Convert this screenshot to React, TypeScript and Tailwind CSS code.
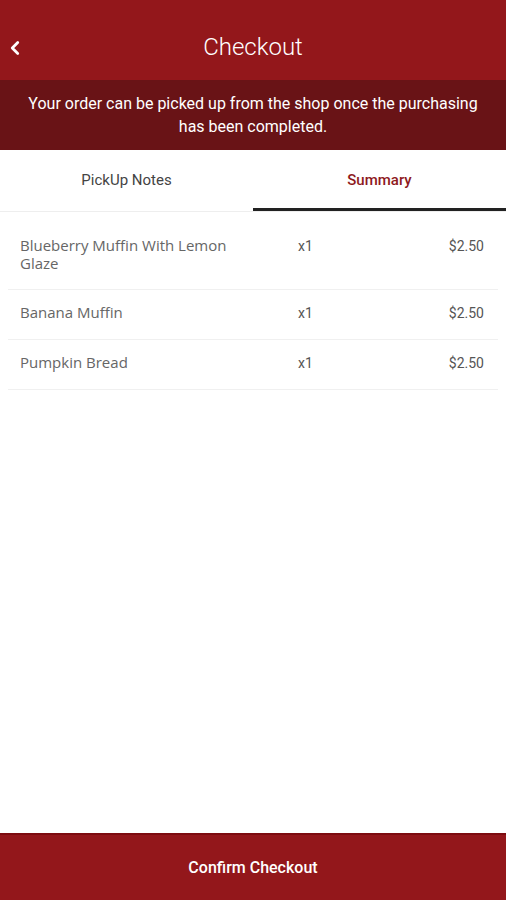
import { ChevronLeft } from "lucide-react";

const items = [
  { name: "Blueberry Muffin With Lemon Glaze", qty: 1, price: "$2.50" },
  { name: "Banana Muffin", qty: 1, price: "$2.50" },
  { name: "Pumpkin Bread", qty: 1, price: "$2.50" },
];

export default function App() {
  return (
    <div className="flex h-[900px] w-[506px] flex-col bg-white font-['Roboto',sans-serif]">
      <header className="relative flex h-[80px] items-center justify-center bg-[#93171b] pt-[14px]">
        <button className="absolute left-[4px] top-[37px] text-white">
          <ChevronLeft size={22} strokeWidth={3} />
        </button>
        <h1 className="text-[24px] font-light text-white">Checkout</h1>
      </header>

      <div className="flex h-[70px] items-center justify-center bg-[#691316] px-4 text-center text-[16px] leading-[23px] text-white">
        Your order can be picked up from the shop once the purchasing has been completed.
      </div>

      <div className="flex h-[62px] border-b border-[#eeeeee]">
        <div className="flex flex-1 items-center justify-center text-[15px] font-normal text-[#444]">PickUp Notes</div>
        <div className="flex flex-1 items-center justify-center border-b-[3px] border-[#222] pt-[3px] text-[15px] font-medium text-[#8e1a1d]">
          Summary
        </div>
      </div>

      <div className="flex-1 px-[8px] pt-[11px]">
        {items.map((item) => (
          <div key={item.name} className="flex border-b border-[#f0f0f0] pb-[17px] pt-[13px]">
            <div className="w-[242px] pl-[12px] font-['Open_Sans',sans-serif] text-[15px] leading-[18px] text-[#666]">
              {item.name}
            </div>
            <div className="w-[124px] pl-[48px] pt-[1px] text-[14px] leading-[18px] text-[#555]">x{item.qty}</div>
            <div className="flex-1 pr-[14px] pt-[1px] text-right text-[14px] leading-[18px] text-[#555]">{item.price}</div>
          </div>
        ))}
      </div>

      <button className="flex h-[67px] items-center justify-center border-t-2 border-[#7d0c10] bg-[#93171b] text-[16px] font-medium text-white">
        Confirm Checkout
      </button>
    </div>
  );
}
